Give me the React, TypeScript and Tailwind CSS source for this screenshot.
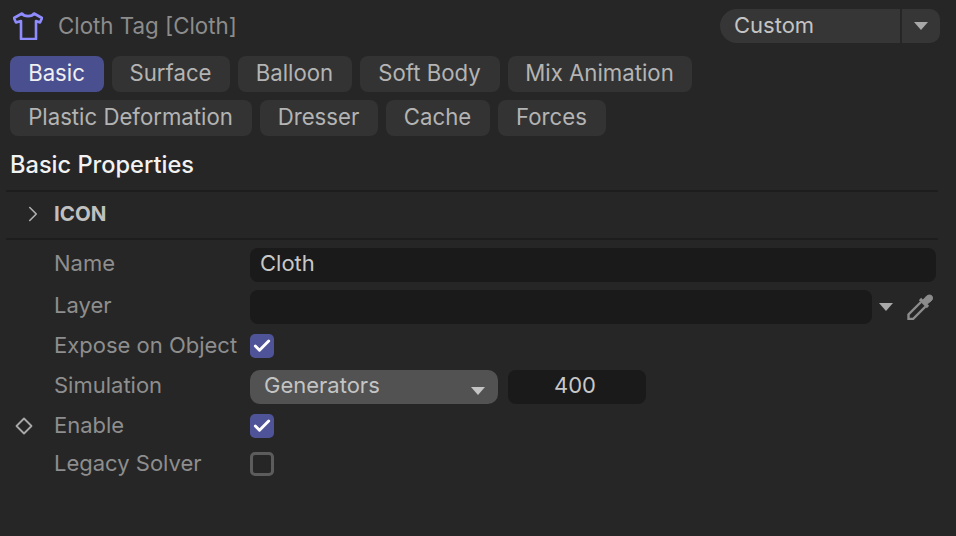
import React from 'react';
import { ChevronRight, Check } from 'lucide-react';

const row1 = [
    { label: 'Basic', width: 'w-[94px]' },
    { label: 'Surface', width: 'w-[118px]' },
    { label: 'Balloon', width: 'w-[114px]' },
    { label: 'Soft Body', width: 'w-[140px]' },
    { label: 'Mix Animation', width: 'w-[184px]' }
];
const row2 = [
    { label: 'Plastic Deformation', width: 'w-[242px]' },
    { label: 'Dresser', width: 'w-[118px]' },
    { label: 'Cache', width: 'w-[104px]' },
    { label: 'Forces', width: 'w-[108px]' }
];

const Tab = ({ label, width }: { label: string; width: string }) => (
    <div className={`h-9 pb-[2px] pr-px flex items-center justify-center rounded-lg text-[22.2px] whitespace-nowrap ${width} ${label === 'Basic' ? 'bg-[#4a4f90] text-[#f0f0f0]' : 'bg-[#333333] text-[#b4b4b4]'}`}>
        {label}
    </div>
);

const Caret = ({ className }: { className: string }) => (
    <svg viewBox="0 0 14 8" className={className}>
        <path d="M0 0H14L7 8Z" fill="currentColor" />
    </svg>
);

const Label = ({ children, tall }: { children: string; tall?: boolean }) => (
    <div className={`w-[250px] pl-[54px] shrink-0 text-[22px] text-[#8e8e8e] whitespace-nowrap ${tall ? 'pb-1' : 'pb-[2px]'}`}>{children}</div>
);

const CheckBox = ({ checked }: { checked: boolean }) =>
    checked ? (
        <div className="w-6 h-6 rounded-[5px] bg-[#4f5397] flex items-center justify-center">
            <Check className="w-5 h-5 text-white" strokeWidth={3.5} />
        </div>
    ) : (
        <div className="w-6 h-6 rounded-[5px] border-[3px] border-[#5c5c5c]" />
    );

export default function App() {
    return (
        <div className="w-[956px] h-[536px] bg-[#262626] overflow-hidden font-['Inter',sans-serif]">
            {/* Header */}
            <div className="h-14 pl-[13px] pr-4 pb-1 flex items-center">
                <svg viewBox="0 0 30 28" className="w-[30px] h-7 text-[#8f8cff]" fill="none" stroke="currentColor" strokeWidth="2.6" strokeLinejoin="round">
                    <path d="M9 1.5C11 5 19 5 21 1.5L29 6L27 10.5L23 9V27H8V9L3 10.5L1 6Z" />
                </svg>
                <span className="ml-[15px] text-[22.3px] text-[#8c8c8c]">Cloth Tag [Cloth]</span>
                <div className="ml-auto h-[34px] w-[220px] flex rounded-l-[17px] rounded-r-[10px] bg-[#363636] text-[22px] text-[#c4c4c4]">
                    <div className="flex-1 pl-[14px] pb-[2px] flex items-center border-r-2 border-[#262626]">Custom</div>
                    <div className="w-[38px] flex items-center justify-center text-[#a8a8a8]">
                        <Caret className="w-[14px] h-2" />
                    </div>
                </div>
            </div>

            {/* Tabs */}
            <div className="pl-[10px] flex flex-col gap-2">
                <div className="flex gap-2">{row1.map((t) => <Tab key={t.label} {...t} />)}</div>
                <div className="flex gap-2">{row2.map((t) => <Tab key={t.label} {...t} />)}</div>
            </div>

            <div className="pl-[10px] h-[54px] pt-1 flex items-center text-[23.6px] font-medium text-[#f2f2f2]">Basic Properties</div>

            {/* ICON group */}
            <div className="mx-[6px] w-[932px] h-[50px] pb-[2px] border-y-2 border-[#1d1d1d] flex items-center">
                <ChevronRight className="ml-[14px] w-[26px] h-[26px] text-[#b0b0b0]" strokeWidth={1.5} />
                <span className="ml-2 text-[20.5px] font-bold text-[#c0c0c0]">ICON</span>
            </div>

            {/* Properties */}
            <div className="mt-2 flex flex-col">
                <div className="h-[34px] flex items-center">
                    <Label tall>Name</Label>
                    <div className="w-[686px] h-full pl-[10px] pb-1 flex items-center rounded-lg bg-[#1a1a1a] text-[22px] text-[#c8c8c8]">Cloth</div>
                </div>
                <div className="mt-2 h-[34px] flex items-center">
                    <Label tall>Layer</Label>
                    <div className="w-[622px] h-full rounded-lg bg-[#1a1a1a]" />
                    <Caret className="ml-[7px] w-[14px] h-2 text-[#a8a8a8]" />
                    <svg viewBox="0 0 26 26" className="ml-[14px] w-[26px] h-[26px] text-[#8c8c8c]" fill="none" stroke="currentColor">
                        <path d="M14 8L1.5 20.5V25H6L18.5 12.5" strokeWidth="2.4" strokeLinejoin="miter" />
                        <path d="M13 5L21 13" strokeWidth="3.2" />
                        <path d="M15.5 6.5L19.5 2.2C21 .8 23.8 .5 25 2.2C26.2 4 25.4 5.8 24 7L19.5 10.5Z" strokeWidth="1" fill="currentColor" />
                    </svg>
                </div>
                <div className="mt-[10px] h-6 flex items-center">
                    <Label>Expose on Object</Label>
                    <CheckBox checked />
                </div>
                <div className="mt-3 h-[34px] flex items-center">
                    <Label tall>Simulation</Label>
                    <div className="w-[248px] h-full pl-[14px] pr-[13px] flex items-center justify-between rounded-[10px] bg-[#525252] text-[22px] text-[#c4c4c4]">
                        <span className="pb-1">Generators</span>
                        <Caret className="w-[14px] h-2 mt-2" />
                    </div>
                    <div className="ml-[10px] w-[138px] h-full pb-1 pr-1 flex items-center justify-center rounded-lg bg-[#1a1a1a] text-[22px] text-[#c8c8c8]">400</div>
                </div>
                <div className="mt-[10px] h-6 flex items-center relative">
                    <svg viewBox="0 0 20 20" className="absolute left-[14px] w-5 h-5 text-[#a8a8a8]" fill="none" stroke="currentColor" strokeWidth="1.8">
                        <path d="M10 2.5L17.5 10L10 17.5L2.5 10Z" strokeLinejoin="round" />
                    </svg>
                    <Label>Enable</Label>
                    <CheckBox checked />
                </div>
                <div className="mt-[14px] h-6 flex items-center">
                    <Label>Legacy Solver</Label>
                    <CheckBox checked={false} />
                </div>
            </div>
        </div>
    );
}
